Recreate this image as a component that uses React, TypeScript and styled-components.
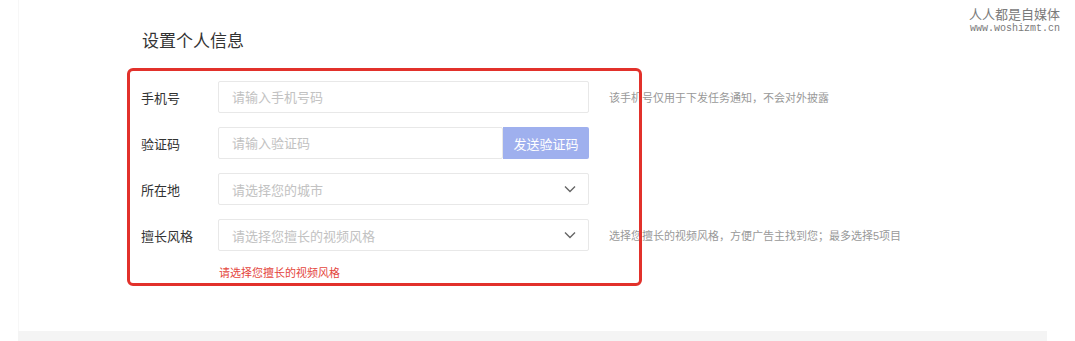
import React from 'react';
import styled, { createGlobalStyle } from 'styled-components';

const GlobalStyle = createGlobalStyle`
  html, body {
    margin: 0;
    padding: 0;
    background: #fff;
    font-family: "Liberation Sans", "Noto Sans CJK SC", sans-serif;
  }
`;

const Page = styled.div`
  position: relative;
  width: 1075px;
  height: 341px;
  overflow: hidden;
  padding-left: 18px;
  box-sizing: border-box;
`;

const Card = styled.section`
  width: 1029px;
  height: 331px;
  box-sizing: border-box;
  border-left: 1px solid #f7f7f7;
  padding: 30px 0 0 122px;
`;

const Footer = styled.div`
  width: 1029px;
  height: 10px;
  background: #f4f4f4;
`;

const Title = styled.h2`
  margin: 0 0 0 1px;
  font-size: 17px;
  line-height: 24px;
  font-weight: normal;
  color: #333;
`;

const Form = styled.div`
  position: relative;
  margin-top: 27px;
`;

const Highlight = styled.div`
  position: absolute;
  left: -14px;
  top: -13px;
  width: 515px;
  height: 218px;
  box-sizing: border-box;
  border: 3px solid #e2312b;
  border-radius: 6px;
  pointer-events: none;
`;

const Row = styled.div`
  display: flex;
  align-items: center;
  height: 32px;
  margin-bottom: 14px;
  &:last-of-type {
    margin-bottom: 0;
  }
`;

const Label = styled.label`
  width: 77px;
  font-size: 13px;
  color: #333;
`;

const Field = styled.div<{ $width?: number }>`
  display: flex;
  align-items: center;
  width: ${(p) => p.$width ?? 371}px;
  height: 32px;
  box-sizing: border-box;
  border: 1px solid #e8e8e8;
  border-radius: 2px;
  padding: 0 12px 0 13px;
`;

const TextInput = styled.input`
  flex: 1;
  border: none;
  outline: none;
  padding: 0;
  font-family: inherit;
  font-size: 13px;
  color: #333;
  background: transparent;
  &::placeholder {
    color: #c2c2c2;
  }
`;

const SelectText = styled.span`
  flex: 1;
  font-size: 13px;
  color: #c2c2c2;
`;

const SendButton = styled.button`
  width: 86px;
  height: 32px;
  border: none;
  border-radius: 0 2px 2px 0;
  background: #9fb0ee;
  color: #fff;
  font-family: inherit;
  font-size: 13px;
  padding: 0;
`;

const Hint = styled.span`
  margin-left: 20px;
  font-size: 11px;
  color: #999;
`;

const ErrorText = styled.div`
  margin: 5px 0 0 78px;
  font-size: 11px;
  line-height: 16px;
  color: #e4463c;
`;

const Watermark = styled.div`
  position: absolute;
  top: 7px;
  right: 15px;
  text-align: right;
  color: #7a7a7a;
`;

const WatermarkName = styled.div`
  font-size: 13px;
  line-height: 16px;
`;

const WatermarkUrl = styled.div`
  font-family: "Liberation Mono", "DejaVu Sans Mono", monospace;
  font-size: 10px;
  line-height: 12px;
`;

function Chevron() {
  return (
    <svg width="12" height="8" viewBox="0 0 12 8">
      <polyline points="1,1.5 6,6.5 11,1.5" fill="none" stroke="#666" strokeWidth="1.4" />
    </svg>
  );
}

export default function App() {
  return (
    <Page>
      <GlobalStyle />
      <Card>
        <Title>设置个人信息</Title>
        <Form>
          <Row>
            <Label>手机号</Label>
            <Field>
              <TextInput readOnly placeholder="请输入手机号码" />
            </Field>
            <Hint>该手机号仅用于下发任务通知，不会对外披露</Hint>
          </Row>
          <Row>
            <Label>验证码</Label>
            <Field $width={285}>
              <TextInput readOnly placeholder="请输入验证码" />
            </Field>
            <SendButton>发送验证码</SendButton>
          </Row>
          <Row>
            <Label>所在地</Label>
            <Field>
              <SelectText>请选择您的城市</SelectText>
              <Chevron />
            </Field>
          </Row>
          <Row>
            <Label>擅长风格</Label>
            <Field>
              <SelectText>请选择您擅长的视频风格</SelectText>
              <Chevron />
            </Field>
            <Hint>选择您擅长的视频风格，方便广告主找到您；最多选择5项目</Hint>
          </Row>
          <ErrorText>请选择您擅长的视频风格</ErrorText>
          <Highlight />
        </Form>
      </Card>
      <Footer />
      <Watermark>
        <WatermarkName>人人都是自媒体</WatermarkName>
        <WatermarkUrl>www.woshizmt.cn</WatermarkUrl>
      </Watermark>
    </Page>
  );
}
